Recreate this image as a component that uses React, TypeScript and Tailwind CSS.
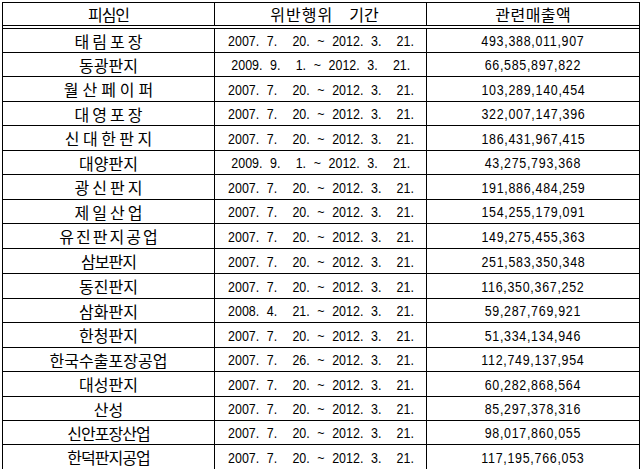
import React from "react";

type Row = { name: string; start: string; sales: string; h: string; tr: string };

const W = "tracking-[3px] pl-[3px]";
const M = "tracking-[0px]";
const N = "tracking-[-1px]";

const rows: Row[] = [
  { name: "태림포장", start: "2007. 7.  20.", sales: "493,388,011,907", h: "h-[24px]", tr: W },
  { name: "동광판지", start: "2009. 9.  1.", sales: "66,585,897,822", h: "h-[24px]", tr: M },
  { name: "월산페이퍼", start: "2007. 7.  20.", sales: "103,289,140,454", h: "h-[25px]", tr: "tracking-[4px] pl-[4px]" },
  { name: "대영포장", start: "2007. 7.  20.", sales: "322,007,147,396", h: "h-[24px]", tr: W },
  { name: "신대한판지", start: "2007. 7.  20.", sales: "186,431,967,415", h: "h-[25px]", tr: "tracking-[3.5px] pl-[3.5px]" },
  { name: "대양판지", start: "2009. 9.  1.", sales: "43,275,793,368", h: "h-[24px]", tr: M },
  { name: "광신판지", start: "2007. 7.  20.", sales: "191,886,484,259", h: "h-[25px]", tr: W },
  { name: "제일산업", start: "2007. 7.  20.", sales: "154,255,179,091", h: "h-[24px]", tr: W },
  { name: "유진판지공업", start: "2007. 7.  20.", sales: "149,275,455,363", h: "h-[25px]", tr: "tracking-[2px] pl-[2px]" },
  { name: "삼보판지", start: "2007. 7.  20.", sales: "251,583,350,348", h: "h-[25px]", tr: N },
  { name: "동진판지", start: "2007. 7.  20.", sales: "116,350,367,252", h: "h-[25px]", tr: M },
  { name: "삼화판지", start: "2008. 4.  21.", sales: "59,287,769,921", h: "h-[24px]", tr: M },
  { name: "한청판지", start: "2007. 7.  20.", sales: "51,334,134,946", h: "h-[25px]", tr: M },
  { name: "한국수출포장공업", start: "2007. 7.  26.", sales: "112,749,137,954", h: "h-[24px]", tr: M },
  { name: "대성판지", start: "2007. 7.  20.", sales: "60,282,868,564", h: "h-[25px]", tr: M },
  { name: "산성", start: "2007. 7.  20.", sales: "85,297,378,316", h: "h-[24px]", tr: M },
  { name: "신안포장산업", start: "2007. 7.  20.", sales: "98,017,860,055", h: "h-[24px]", tr: N },
  { name: "한덕판지공업", start: "2007. 7.  20.", sales: "117,195,766,053", h: "h-[24px]", tr: N },
];

const kr = "font-['Noto_Sans_CJK_KR',sans-serif] font-normal text-[16px] leading-none";
const num = "font-['Liberation_Sans',sans-serif] text-[15px] leading-none";

export default function App() {
  return (
    <div className="bg-white w-[642px] h-[469px] pt-[2px] pl-[2px]">
      <div className="w-[638px] border border-black text-black">
        <div className="grid grid-cols-[211px_1px_211px_1px_212px] h-[23px] border-b border-black">
          <div className={`${kr} flex items-center justify-center tracking-[-1px]`}>피심인</div>
          <div className="bg-black" />
          <div className={`${kr} flex items-center justify-center gap-[16px] pl-[8px]`}>
            <span className="tracking-[1px]">위반행위</span>
            <span className="tracking-[0px]">기간</span>
          </div>
          <div className="bg-black" />
          <div className={`${kr} flex items-center justify-center tracking-[0.5px] pl-[0.5px]`}>관련매출액</div>
        </div>
        <div className="mt-[2px] border-t border-black">
          {rows.map((r, i) => (
            <div
              key={r.name}
              className={`grid grid-cols-[211px_1px_211px_1px_212px] ${r.h} ${i < rows.length - 1 ? "border-b border-black" : ""}`}
            >
              <div className={`${kr} ${r.tr} flex items-center justify-center`}>{r.name}</div>
              <div className="bg-black" />
              <div className="flex items-center justify-center overflow-visible">
                <span className={`${num} inline-block shrink-0 whitespace-pre [word-spacing:5px] scale-x-[0.83]`}>
                  {`${r.start} ~ 2012. 3.  21.`}
                </span>
              </div>
              <div className="bg-black" />
              <div className="flex items-center justify-center">
                <span className={`${num} inline-block shrink-0 whitespace-pre tracking-[0.85px] pl-[0.85px] scale-x-[0.83]`}>
                  {r.sales}
                </span>
              </div>
            </div>
          ))}
        </div>
      </div>
    </div>
  );
}
